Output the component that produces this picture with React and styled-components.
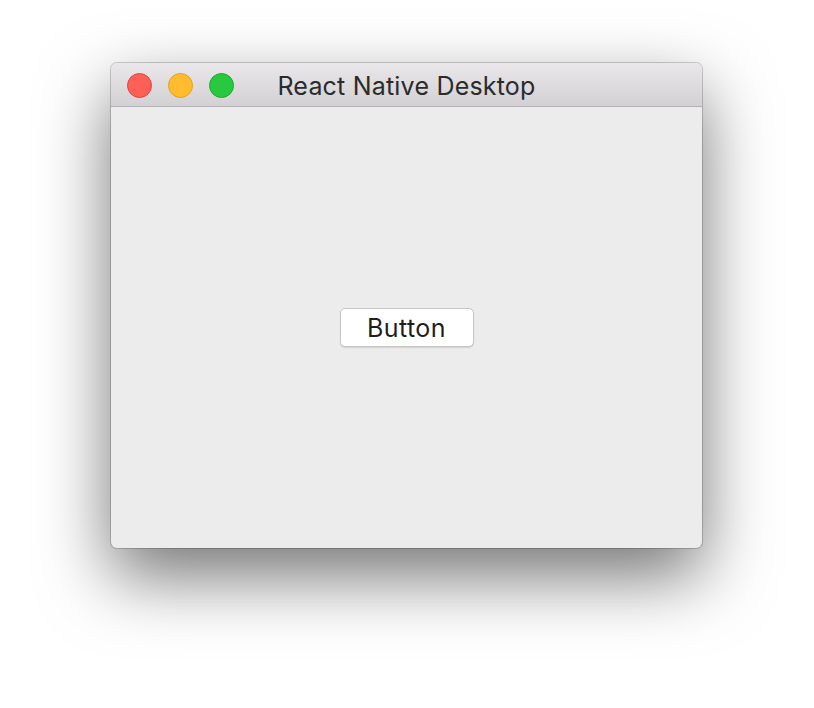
import styled, { createGlobalStyle } from "styled-components"

const GlobalStyle = createGlobalStyle`
body {
    margin: 0;
    background: #ffffff;
    font-family: Inter, "Liberation Sans", sans-serif;
}
`

export default function App() {
return (
    <Page>
    <GlobalStyle />
    <Window>
        <TitleBar>
            <Lights>
                <Light color="#fe5f57" edge="#e0443e" />
                <Light color="#febc2e" edge="#dea123" />
                <Light color="#28c840" edge="#1aab29" />
            </Lights>
            <Title>React Native Desktop</Title>
        </TitleBar>
        <Content>
            <Button>Button</Button>
        </Content>
    </Window>
    </Page>
    )
}

const Page = styled.div`
width: 814px;
height: 708px;
padding: 63px 0 0 111px;
box-sizing: border-box;
overflow: hidden;
`

const Window = styled.div`
width: 591px;
height: 485px;
display: flex;
flex-direction: column;
border-radius: 6px;
overflow: hidden;
background: #ececec;
box-shadow: 0 0 0 1px rgba(0, 0, 0, 0.18), 0 28px 70px rgba(0, 0, 0, 0.55);
`

const TitleBar = styled.div`
position: relative;
height: 44px;
padding-top: 3px;
box-sizing: border-box;
display: flex;
align-items: center;
justify-content: center;
background: linear-gradient(#e9e7e9, #d3d1d3);
border-bottom: 1px solid #b4b2b4;
`

const Lights = styled.div`
position: absolute;
left: 16px;
top: 10px;
display: flex;
gap: 16px;
`

const Light = styled.span`
width: 23px;
height: 23px;
border-radius: 50%;
background: ${p => p.color};
border: 0.5px solid ${p => p.edge};
`

const Title = styled.span`
font-size: 25px;
color: #2b2b2b;
letter-spacing: 0.2px;
`

const Content = styled.div`
flex: 1;
display: flex;
align-items: center;
justify-content: center;
`

const Button = styled.div`
width: 134px;
height: 39px;
box-sizing: border-box;
display: flex;
align-items: center;
justify-content: center;
background: #ffffff;
border: 1px solid #c6c6c6;
border-radius: 5px;
box-shadow: 0 1px 1px rgba(0, 0, 0, 0.12);
font-size: 25px;
letter-spacing: 0.4px;
color: #1e1e1e;
`
